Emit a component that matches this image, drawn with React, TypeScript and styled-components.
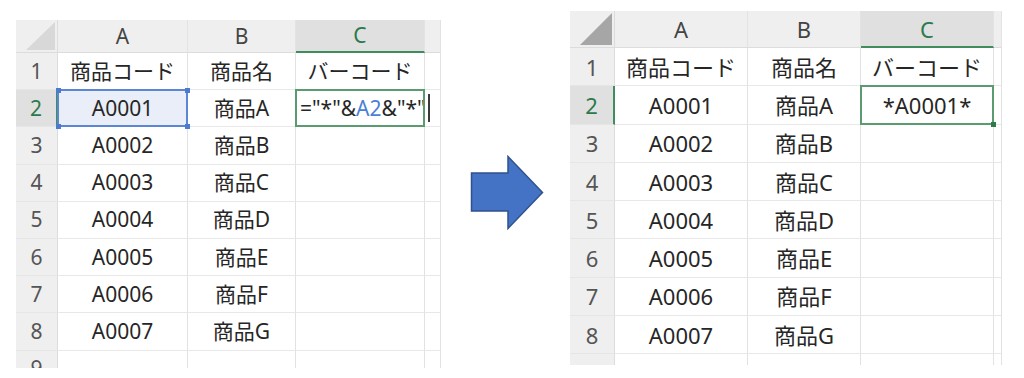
import React from "react";
import styled, { createGlobalStyle, css } from "styled-components";

const Global = createGlobalStyle`
  html, body { margin: 0; padding: 0; background: #ffffff; }
  body { font-family: "Noto Sans", "Noto Sans CJK JP", sans-serif; }
`;

const Page = styled.div`
  display: flex;
  align-items: flex-start;
  width: 1024px;
  height: 378px;
  padding-left: 16px;
  box-sizing: border-box;
  overflow: hidden;
`;

const SheetFrame = styled.div<{ $top: number; $height: number; $left: number }>`
  margin-top: ${(p) => p.$top}px;
  margin-left: ${(p) => p.$left}px;
  height: ${(p) => p.$height}px;
  overflow: hidden;
  flex: none;
`;

const Grid = styled.div<{ $cols: number[]; $headerH: number; $rowH: number; $font: number }>`
  display: grid;
  grid-template-columns: ${(p) => p.$cols.map((c) => `${c}px`).join(" ")};
  grid-template-rows: ${(p) => `${p.$headerH}px repeat(9, ${p.$rowH}px)`};
  font-size: ${(p) => p.$font}px;
  color: #262626;
  background: #ffffff;
`;

const Corner = styled.div`
  background: #efefef;
  border-right: 1px solid #dcdcdc;
  border-bottom: 1px solid #dcdcdc;
  display: flex;
  align-items: stretch;
  justify-content: stretch;
  padding: 2px 2px 2px 10px;
  box-sizing: border-box;
`;

const ColHead = styled.div<{ $active?: boolean }>`
  display: flex;
  align-items: center;
  justify-content: center;
  box-sizing: border-box;
  background: ${(p) => (p.$active ? "#e0e0e0" : "#efefef")};
  color: ${(p) => (p.$active ? "#2b7a4b" : "#444444")};
  border-right: 1px solid #e3e3e3;
  border-bottom: ${(p) => (p.$active ? "2px solid #3f8d5c" : "1px solid #dcdcdc")};
  line-height: 1;
`;

const RowHead = styled.div<{ $active?: boolean }>`
  display: flex;
  align-items: center;
  justify-content: center;
  box-sizing: border-box;
  background: ${(p) => (p.$active ? "#e0e0e0" : "#efefef")};
  color: ${(p) => (p.$active ? "#2b7a4b" : "#555555")};
  border-right: ${(p) => (p.$active ? "2px solid #3f8d5c" : "1px solid #dcdcdc")};
  border-bottom: 1px solid #e6e6e6;
  line-height: 1;
`;

const Cell = styled.div<{ $align?: "left" | "center"; $mark?: "ref" | "active" }>`
  position: relative;
  display: flex;
  align-items: center;
  justify-content: ${(p) => (p.$align === "left" ? "flex-start" : "center")};
  padding-left: ${(p) => (p.$align === "left" ? "4px" : "0")};
  box-sizing: border-box;
  border-right: 1px solid #e2e2e2;
  border-bottom: 1px solid #e8e8e8;
  white-space: nowrap;
  overflow: visible;
  line-height: 1;
  z-index: ${(p) => (p.$mark ? 2 : 1)};
  ${(p) =>
    p.$mark === "ref" &&
    css`
      background: #e9eef8;
    `}
  ${(p) =>
    p.$mark &&
    css`
      &::after {
        content: "";
        position: absolute;
        left: -1px;
        top: -1px;
        right: -1px;
        bottom: -1px;
        border: 2px solid ${p.$mark === "ref" ? "#5a86d4" : "#5a9c70"};
        pointer-events: none;
      }
    `}
`;

const Handle = styled.span<{ $pos: "tl" | "tr" | "bl" | "br"; $color: string }>`
  position: absolute;
  width: 5px;
  height: 5px;
  background: ${(p) => p.$color};
  z-index: 3;
  ${(p) => (p.$pos[0] === "t" ? "top: -2px;" : "bottom: -3px;")}
  ${(p) => (p.$pos[1] === "l" ? "left: -2px;" : "right: -3px;")}
`;

const Blue = styled.span`
  color: #4a7fd6;
`;

const Caret = styled.span`
  display: inline-block;
  width: 0;
  height: 28px;
  border-left: 2px solid #3a3a3a;
  margin-left: 2px;
`;

const ArrowWrap = styled.div`
  flex: none;
  margin-top: 155px;
  margin-left: 29px;
  width: 74px;
  height: 75px;
`;

const rows: [string, string][] = [
  ["商品コード", "商品名"],
  ["A0001", "商品A"],
  ["A0002", "商品B"],
  ["A0003", "商品C"],
  ["A0004", "商品D"],
  ["A0005", "商品E"],
  ["A0006", "商品F"],
  ["A0007", "商品G"],
  ["", ""],
];

type SheetProps = {
  mode: "formula" | "result";
  cols: number[];
  headerH: number;
  rowH: number;
  font: number;
  triangle: string;
  showLastNumber: boolean;
};

function Sheet({ mode, cols, headerH, rowH, font, triangle, showLastNumber }: SheetProps) {
  return (
    <Grid $cols={cols} $headerH={headerH} $rowH={rowH} $font={font}>
      <Corner>
        <svg width="100%" height="100%" viewBox="0 0 10 10" preserveAspectRatio="none">
          <polygon points="0,10 10,0 10,10" fill={triangle} />
        </svg>
      </Corner>
      <ColHead>A</ColHead>
      <ColHead>B</ColHead>
      <ColHead $active>C</ColHead>
      <ColHead />
      {rows.map(([a, b], i) => {
        const n = i + 1;
        let cContent: React.ReactNode = null;
        let cMark: "active" | undefined;
        let cAlign: "left" | "center" = "center";
        if (n === 1) cContent = "バーコード";
        if (n === 2) {
          cMark = "active";
          if (mode === "formula") {
            cAlign = "left";
            cContent = (
              <>
                {'="*"&'}
                <Blue>A2</Blue>
                {'&"*"'}
                <Caret />
              </>
            );
          } else {
            cContent = (
              <>
                *A0001*
                <Handle $pos="br" $color="#2f7a4a" />
              </>
            );
          }
        }
        const aRef = mode === "formula" && n === 2;
        return (
          <React.Fragment key={n}>
            <RowHead $active={n === 2}>{n === 9 && !showLastNumber ? "" : n}</RowHead>
            <Cell $mark={aRef ? "ref" : undefined}>
              {a}
              {aRef && (
                <>
                  <Handle $pos="tl" $color="#4a7bd0" />
                  <Handle $pos="tr" $color="#4a7bd0" />
                  <Handle $pos="bl" $color="#4a7bd0" />
                  <Handle $pos="br" $color="#4a7bd0" />
                </>
              )}
            </Cell>
            <Cell>{b}</Cell>
            <Cell $align={cAlign} $mark={cMark}>
              {cContent}
            </Cell>
            <Cell />
          </React.Fragment>
        );
      })}
    </Grid>
  );
}

function Arrow() {
  return (
    <ArrowWrap>
      <svg width="74" height="75" viewBox="0 0 74 75">
        <polygon
          points="1.5,18 38,18 38,1.5 72.5,37.5 38,73.5 38,56 1.5,56"
          fill="#4472c4"
          stroke="#2f528f"
          strokeWidth="1.5"
          strokeLinejoin="miter"
        />
      </svg>
    </ArrowWrap>
  );
}

export default function App() {
  return (
    <>
      <Global />
      <Page>
        <SheetFrame $top={20} $height={348} $left={0}>
          <Sheet
            mode="formula"
            cols={[42, 130, 108, 129, 16]}
            headerH={33}
            rowH={37.2}
            font={21}
            triangle="#d8d8d8"
            showLastNumber
          />
        </SheetFrame>
        <Arrow />
        <SheetFrame $top={11} $height={354} $left={26}>
          <Sheet
            mode="result"
            cols={[45, 133, 113, 133, 8]}
            headerH={37}
            rowH={38.3}
            font={22}
            triangle="#a6a6a6"
            showLastNumber={false}
          />
        </SheetFrame>
      </Page>
    </>
  );
}
